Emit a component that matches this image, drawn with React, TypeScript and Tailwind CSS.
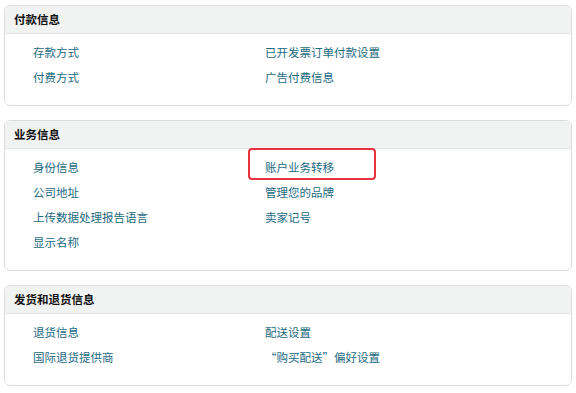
import React from "react";

type Item = { label: string; highlight?: boolean };

function Section({ title, left, right }: { title: string; left: Item[]; right: Item[] }) {
  const rows = Math.max(left.length, right.length);
  const cells: React.ReactNode[] = [];
  for (let i = 0; i < rows; i++) {
    const l = left[i];
    const r = right[i];
    cells.push(
      <div key={"l" + i} className="relative h-[25px] leading-[25px]">
        {l && <a className="text-[#1d6a7f]">{l.label}</a>}
      </div>
    );
    cells.push(
      <div key={"r" + i} className="relative h-[25px] leading-[25px]">
        {r && <a className="text-[#1d6a7f]">{r.label}</a>}
        {r && r.highlight && (
          <div className="absolute left-[-17px] top-[-7px] w-[128px] h-[32px] rounded-[4px] border-2 border-[#e8343f]" />
        )}
      </div>
    );
  }
  return (
    <div className="mx-[4px] rounded-[6px] border border-[#dcdcdc] bg-white overflow-visible">
      <div className="h-[28px] flex items-center px-[9px] bg-[#f1f2f2] border-b border-[#e2e3e3] rounded-t-[6px]">
        <span className="text-[11.5px] font-bold text-[#111111]">{title}</span>
      </div>
      <div className="grid grid-cols-[232px_1fr] pl-[28px] pt-[6px] pb-[15px] text-[11.5px]">
        {cells}
      </div>
    </div>
  );
}

export default function App() {
  return (
    <div
      className="w-[576px] h-[393px] bg-white pt-[5px] flex flex-col gap-[14px]"
      style={{ fontFamily: '"Noto Sans CJK SC", "Noto Sans", sans-serif' }}
    >
      <Section
        title="付款信息"
        left={[{ label: "存款方式" }, { label: "付费方式" }]}
        right={[{ label: "已开发票订单付款设置" }, { label: "广告付费信息" }]}
      />
      <Section
        title="业务信息"
        left={[
          { label: "身份信息" },
          { label: "公司地址" },
          { label: "上传数据处理报告语言" },
          { label: "显示名称" },
        ]}
        right={[
          { label: "账户业务转移", highlight: true },
          { label: "管理您的品牌" },
          { label: "卖家记号" },
        ]}
      />
      <Section
        title="发货和退货信息"
        left={[{ label: "退货信息" }, { label: "国际退货提供商" }]}
        right={[{ label: "配送设置" }, { label: "“购买配送”偏好设置" }]}
      />
    </div>
  );
}
